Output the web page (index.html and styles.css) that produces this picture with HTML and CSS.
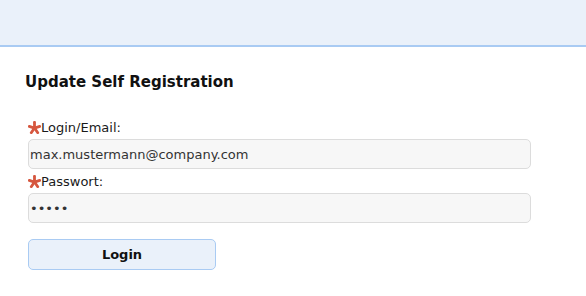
FILE: index.html
```html
<!DOCTYPE html>
<html lang="en">
<head>
  <meta charset="UTF-8">
  <title>Update Self Registration</title>
  <link rel="stylesheet" href="styles.css">
</head>
<body>
  <div class="header"></div>

  <div class="content">
    <h1 class="page-title">Update Self Registration</h1>

    <form class="login-form">
      <label class="field-label" for="login">
        <svg class="required" viewBox="0 0 12 12" width="13" height="13">
          <g stroke="#d6573f" stroke-width="2.6" stroke-linecap="round">
            <line x1="6" y1="6.5" x2="6" y2="1.2"/>
            <line x1="6" y1="6.5" x2="1.2" y2="5"/>
            <line x1="6" y1="6.5" x2="10.8" y2="5"/>
            <line x1="6" y1="6.5" x2="3" y2="10.8"/>
            <line x1="6" y1="6.5" x2="9" y2="10.8"/>
          </g>
        </svg>Login/Email:
      </label>
      <input class="text-input" id="login" type="text" value="max.mustermann@company.com">

      <label class="field-label" for="password">
        <svg class="required" viewBox="0 0 12 12" width="13" height="13">
          <g stroke="#d6573f" stroke-width="2.6" stroke-linecap="round">
            <line x1="6" y1="6.5" x2="6" y2="1.2"/>
            <line x1="6" y1="6.5" x2="1.2" y2="5"/>
            <line x1="6" y1="6.5" x2="10.8" y2="5"/>
            <line x1="6" y1="6.5" x2="3" y2="10.8"/>
            <line x1="6" y1="6.5" x2="9" y2="10.8"/>
          </g>
        </svg>Passwort:
      </label>
      <input class="text-input" id="password" type="password" value="12345">

      <button class="login-btn" type="button">Login</button>
    </form>
  </div>
</body>
</html>
```

FILE: styles.css
```css
body {
  margin: 0;
  padding: 0;
  font-family: "DejaVu Sans", Verdana, sans-serif;
  font-size: 13px;
  color: #1a1a1a;
  background-color: #fff;
}

.header {
  height: 45px;
  background-color: #eaf1fa;
  border-bottom: 2px solid #a9cbf3;
}

.content {
  padding: 0 25px;
}

.page-title {
  margin: 26px 0 27px;
  font-size: 15px;
  font-weight: bold;
  color: #111;
}

.login-form {
  display: flex;
  flex-direction: column;
  padding-left: 3px;
  width: 503px;
}

.field-label {
  display: flex;
  align-items: center;
  height: 18px;
  margin-bottom: 3px;
}

.text-input {
  box-sizing: border-box;
  height: 30px;
  width: 100%;
  margin: 0 0 3px;
  padding: 0 1px;
  font-family: "DejaVu Sans", Verdana, sans-serif;
  font-size: 13px;
  color: #333;
  background-color: #f7f7f7;
  border: 1px solid #dcdcdc;
  border-radius: 5px;
  outline: none;
}

.login-btn {
  box-sizing: border-box;
  width: 188px;
  height: 31px;
  margin-top: 13px;
  font-family: "DejaVu Sans", Verdana, sans-serif;
  font-size: 13px;
  font-weight: bold;
  color: #111;
  background-color: #eaf1fa;
  border: 1px solid #a9cbf3;
  border-radius: 5px;
  cursor: pointer;
}
```
